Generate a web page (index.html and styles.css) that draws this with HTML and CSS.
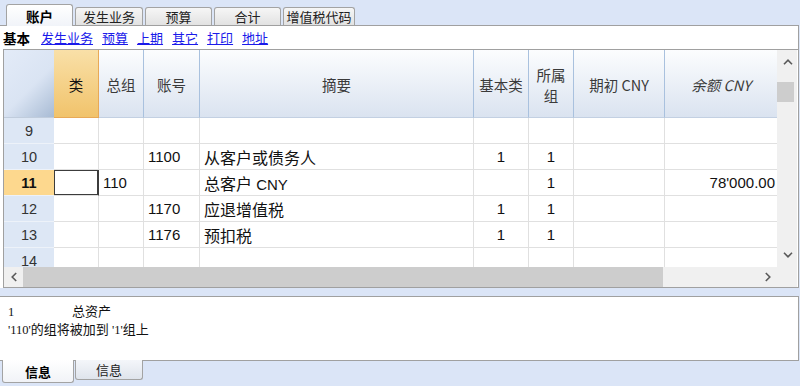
FILE: index.html
```html
<!DOCTYPE html>
<html lang="zh">
<head>
<meta charset="utf-8">
<link rel="stylesheet" href="styles.css">
</head>
<body>
<div class="tabs">
  <div class="tab active w67">账户</div>
  <div class="tab w68">发生业务</div>
  <div class="tab w67">预算</div>
  <div class="tab w67">合计</div>
  <div class="tab w72">增值税代码</div>
</div>
<div class="panel">
  <div class="subnav">
    <span class="cur">基本</span>
    <a>发生业务</a><a>预算</a><a>上期</a><a>其它</a><a>打印</a><a>地址</a>
  </div>
  <div class="grid">
    <div class="table">
      <div class="row head">
        <div class="hc corner"></div>
        <div class="hc sel">类</div>
        <div class="hc">总组</div>
        <div class="hc">账号</div>
        <div class="hc">摘要</div>
        <div class="hc">基本类</div>
        <div class="hc">所属<br>组</div>
        <div class="hc">期初 CNY</div>
        <div class="hc it">余额 CNY</div>
      </div>
      <div class="row">
        <div class="rn">9</div>
        <div class="c"></div><div class="c"></div><div class="c"></div><div class="c"></div>
        <div class="c"></div><div class="c"></div><div class="c"></div><div class="c"></div>
      </div>
      <div class="row">
        <div class="rn">10</div>
        <div class="c"></div><div class="c"></div><div class="c">1100</div><div class="c"><span class="zh">从客户或债务人</span></div>
        <div class="c ctr">1</div><div class="c ctr">1</div><div class="c"></div><div class="c"></div>
      </div>
      <div class="row">
        <div class="rn on">11</div>
        <div class="c focus"></div><div class="c">110</div><div class="c"></div><div class="c"><span><span class="zh">总客户</span> CNY</span></div>
        <div class="c"></div><div class="c ctr">1</div><div class="c"></div><div class="c rt">78'000.00</div>
      </div>
      <div class="row">
        <div class="rn">12</div>
        <div class="c"></div><div class="c"></div><div class="c">1170</div><div class="c"><span class="zh">应退增值税</span></div>
        <div class="c ctr">1</div><div class="c ctr">1</div><div class="c"></div><div class="c"></div>
      </div>
      <div class="row">
        <div class="rn">13</div>
        <div class="c"></div><div class="c"></div><div class="c">1176</div><div class="c"><span class="zh">预扣税</span></div>
        <div class="c ctr">1</div><div class="c ctr">1</div><div class="c"></div><div class="c"></div>
      </div>
      <div class="row">
        <div class="rn">14</div>
        <div class="c"></div><div class="c"></div><div class="c"></div><div class="c"></div>
        <div class="c"></div><div class="c"></div><div class="c"></div><div class="c"></div>
      </div>
    </div>
    <div class="vscroll">
      <div class="vbtn"><svg width="10" height="6" viewBox="0 0 10 6"><polyline points="1,5.2 5,1.2 9,5.2" fill="none" stroke="#5a5a5a" stroke-width="1.6"/></svg></div>
      <div class="vthumb"></div>
      <div class="vfill"></div>
      <div class="vbtn"><svg width="10" height="6" viewBox="0 0 10 6"><polyline points="1,0.8 5,4.8 9,0.8" fill="none" stroke="#5a5a5a" stroke-width="1.6"/></svg></div>
    </div>
    <div class="hscroll">
      <div class="hbtn"><svg width="6" height="10" viewBox="0 0 6 10"><polyline points="5.2,1 1.2,5 5.2,9" fill="none" stroke="#5a5a5a" stroke-width="1.6"/></svg></div>
      <div class="hthumb"></div>
      <div class="hfill"></div>
      <div class="hbtn"><svg width="6" height="10" viewBox="0 0 6 10"><polyline points="0.8,1 4.8,5 0.8,9" fill="none" stroke="#5a5a5a" stroke-width="1.6"/></svg></div>
      <div class="hcorner"></div>
    </div>
  </div>
</div>
<div class="info">
  <div class="line"><span class="num">1</span><span class="zh">总资产</span></div>
  <div class="line">'110'<span class="zh">的组将被加到</span> '1'<span class="zh">组上</span></div>
</div>
<div class="btabs">
  <div class="btab active">信息</div>
  <div class="btab">信息</div>
</div>
</body>
</html>
```

FILE: styles.css
```css
html, body {
  margin: 0;
  padding: 0;
}
body {
  background: #dbe5f7;
  width: 800px;
  height: 386px;
  overflow: hidden;
  font-family: "Liberation Sans", "Noto Sans CJK SC", sans-serif;
  color: #1a1a1a;
}
.tabs {
  height: 25px;
  display: flex;
  align-items: flex-end;
  padding-left: 6px;
  gap: 2px;
  position: relative;
  z-index: 2;
}
.tab {
  box-sizing: border-box;
  height: 18px;
  border: 1px solid #a3a3a3;
  border-bottom: none;
  border-radius: 3px 3px 0 0;
  background: linear-gradient(#f6f6f6, #e2e2e2);
  font-family: "Noto Sans CJK SC", sans-serif;
  font-size: 13px;
  display: flex;
  align-items: center;
  justify-content: center;
  color: #222;
}
.w67 { width: 67px; }
.w68 { width: 68px; }
.w72 { width: 72px; }
.tab.active {
  height: 22px;
  margin-bottom: -1px;
  background: linear-gradient(#ffffff, #f1f4f9);
  font-weight: bold;
  font-size: 13.5px;
  color: #000;
}
.panel {
  position: relative;
  z-index: 1;
  background: #fff;
  border-top: 1px solid #a0a0a0;
  border-right: 1px solid #a0a0a0;
  width: 798px;
  height: 262px;
}
.subnav {
  height: 23px;
  display: flex;
  align-items: center;
  padding-left: 3px;
  gap: 9px;
  font-family: "Noto Sans CJK SC", sans-serif;
  font-size: 13px;
}
.subnav .cur {
  font-weight: bold;
  font-size: 13.5px;
  color: #000;
  margin-right: 2px;
}
.subnav a {
  color: #1a1aea;
  text-decoration: underline;
}
.grid {
  margin-left: 3px;
  border: 1px solid #a0a0a0;
  border-right: none;
  height: 237px;
  display: grid;
  grid-template-columns: 773px 20px;
  grid-template-rows: 217px 20px;
}
.table {
  overflow: hidden;
}
.row {
  display: grid;
  grid-template-columns: 50px 45px 45px 56px 274px 55px 45px 91px 112px;
  height: 26px;
}
.row.head {
  height: 68px;
}
.hc {
  box-sizing: border-box;
  background: linear-gradient(#fcfdfe, #dae3f0);
  border-right: 1px solid #a9c1de;
  border-bottom: 1px solid #c3d0e2;
  display: flex;
  align-items: center;
  justify-content: center;
  text-align: center;
  font-family: "Noto Sans CJK SC", sans-serif;
  font-size: 14.5px;
  line-height: 21px;
  color: #3a3a3a;
  padding-top: 2px;
}
.hc.corner {
  background: linear-gradient(135deg, #e3ebf8 0%, #dae4f3 55%, #a8bbd4 100%);
  border-right: none;
  border-bottom: 1px solid #c0ccdc;
}
.hc.sel {
  background: linear-gradient(#f9e0a8, #f1c36b);
  border-right: 1px solid #e8a957;
  border-bottom: 1px solid #e8a957;
  color: #111;
}
.hc.it {
  font-style: italic;
  border-right: none;
}
.rn {
  box-sizing: border-box;
  background: #dde7f5;
  border-bottom: 1px solid #edf2f9;
  display: flex;
  align-items: center;
  justify-content: center;
  font-size: 14.5px;
  color: #333;
}
.rn.on {
  background: #fdd88e;
  font-weight: bold;
  color: #111;
}
.c {
  box-sizing: border-box;
  border-right: 1px solid #e0e0e0;
  border-bottom: 1px solid #e0e0e0;
  display: flex;
  align-items: center;
  padding: 0 4px;
  font-size: 15px;
  color: #111;
  white-space: nowrap;
}
.c:last-child {
  border-right: none;
}
.c.ctr { justify-content: center; }
.c.rt { justify-content: flex-end; padding-right: 2px; }
.c.focus {
  box-shadow: inset 1px 1px 0 #3c3c3c, inset -1px -1px 0 #3c3c3c;
  border-right-color: #3c3c3c;
}
.zh {
  font-family: "Noto Sans CJK SC", sans-serif;
  font-size: 16px;
}
.vscroll {
  background: #f0f0f0;
  display: flex;
  flex-direction: column;
}
.vbtn {
  height: 24px;
  display: flex;
  align-items: center;
  justify-content: center;
  padding-left: 1px;
}
.vthumb {
  margin-top: 8px;
  height: 20px;
  width: 17px;
  background: #cdcdcd;
}
.vfill { flex: 1; }
.hscroll {
  grid-column: 1 / 3;
  background: #f0f0f0;
  display: flex;
}
.hbtn {
  width: 19px;
  display: flex;
  align-items: center;
  justify-content: center;
}
.hthumb {
  width: 640px;
  background: #cdcdcd;
}
.hfill { flex: 1; }
.hcorner { width: 20px; }
.info {
  margin-top: 8px;
  background: #fff;
  border: 1px solid #a0a0a0;
  border-left: none;
  width: 798px;
  height: 63px;
  box-sizing: content-box;
  padding: 0;
}
.info .line {
  padding-left: 8px;
  height: 18px;
  line-height: 18px;
  font-family: "Liberation Serif", "Noto Sans CJK SC", serif;
  font-size: 12.5px;
  color: #111;
  white-space: nowrap;
}
.info .line:first-child {
  margin-top: 5px;
}
.info .zh {
  font-size: 13px;
}
.info .num {
  display: inline-block;
  width: 64px;
}
.btabs {
  display: flex;
  align-items: flex-start;
  padding-left: 2px;
  gap: 1px;
  margin-top: -1px;
}
.btab {
  box-sizing: border-box;
  width: 68px;
  height: 20px;
  border: 1px solid #a3a3a3;
  border-top: none;
  border-radius: 0 0 3px 3px;
  background: linear-gradient(#f4f6fa, #dfe4ec);
  display: flex;
  align-items: center;
  justify-content: center;
  font-family: "Noto Sans CJK SC", sans-serif;
  font-size: 13px;
  color: #222;
}
.btab.active {
  width: 72px;
  height: 23px;
  background: linear-gradient(#ffffff, #f1f3f7);
  font-weight: bold;
  color: #000;
}
```
